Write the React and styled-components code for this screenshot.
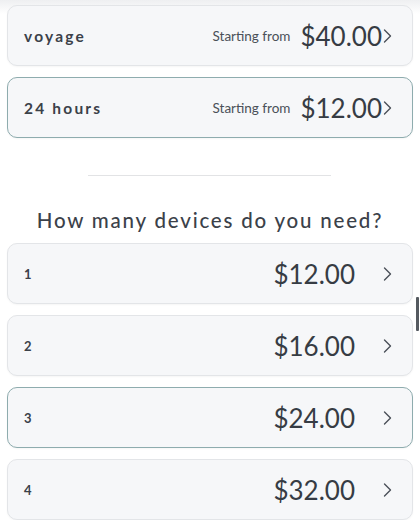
import styled, { createGlobalStyle } from "styled-components";

const GlobalStyle = createGlobalStyle`
    body {
        margin: 0;
        background: #ffffff;
        font-family: "Lato", "Noto Sans", sans-serif;
    }
`;

const Page = styled.div`
    position: relative;
    width: 420px;
    height: 520px;
    overflow: hidden;
    padding: 5px 7px 0;
    box-sizing: border-box;
    background: linear-gradient(#eeeff1 0px, #ffffff 14px);
`;

const List = styled.div`
    display: flex;
    flex-direction: column;
    gap: 11px;
`;

const Card = styled.div`
    height: 61px;
    box-sizing: border-box;
    display: flex;
    align-items: center;
    padding: 0 20px 0 16px;
    background: #f6f7f9;
    border: ${({$active}) => $active ? "1.5px solid #8eacae" : "1px solid #e3e5e8"};
    border-radius: 10px;
    box-shadow: 0 1px 2px rgba(0, 0, 0, 0.04);
`;

const Label = styled.span`
    flex: 1;
    font-family: "Lato", sans-serif;
    font-weight: 700;
    font-size: ${({$small}) => $small ? "13px" : "15.5px"};
    letter-spacing: ${({$small}) => $small ? "0" : "2.2px"};
    color: #3b4149;
`;

const Starting = styled.span`
    font-size: 13.5px;
    color: #4a5058;
    margin-right: 10px;
`;

const Price = styled.span`
    font-family: "Lato", sans-serif;
    font-size: 26px;
    font-weight: 400;
    color: #363c44;
    margin-right: ${({$gap}) => $gap}px;
`;

const Divider = styled.div`
    width: 243px;
    height: 1px;
    background: #e2e3e5;
    margin: 37px auto 0 81px;
`;

const Heading = styled.h2`
    margin: 32px 0 11px;
    text-align: center;
    font-family: "Lato", sans-serif;
    font-weight: 500;
    font-size: 20.5px;
    letter-spacing: 1.8px;
    color: #3b4149;
`;

const ScrollThumb = styled.div`
    position: absolute;
    right: 1px;
    top: 297px;
    width: 3px;
    height: 34px;
    background: #555a60;
    border-radius: 1px;
`;

function Chevron() {
    return (
        <svg width="9" height="16" viewBox="0 0 9 16" fill="none">
            <polyline points="1.5,2 7.5,8 1.5,14" stroke="#4a5058" strokeWidth="1.4" strokeLinecap="round" strokeLinejoin="round" />
        </svg>
    );
}

const plans = [
    { name: "voyage", price: "$40.00" },
    { name: "24 hours", price: "$12.00", active: true },
];

const devices = [
    { count: "1", price: "$12.00" },
    { count: "2", price: "$16.00" },
    { count: "3", price: "$24.00", active: true },
    { count: "4", price: "$32.00" },
];

export default function App() {
    return (
        <Page>
            <GlobalStyle />
            <List>
                {plans.map((p) => (
                    <Card key={p.name} $active={p.active}>
                        <Label>{p.name}</Label>
                        <Starting>Starting from</Starting>
                        <Price $gap={1}>{p.price}</Price>
                        <Chevron />
                    </Card>
                ))}
            </List>
            <Divider />
            <Heading>How many devices do you need?</Heading>
            <List>
                {devices.map((d) => (
                    <Card key={d.count} $active={d.active}>
                        <Label $small>{d.count}</Label>
                        <Price $gap={28}>{d.price}</Price>
                        <Chevron />
                    </Card>
                ))}
            </List>
            <ScrollThumb />
        </Page>
    );
}
